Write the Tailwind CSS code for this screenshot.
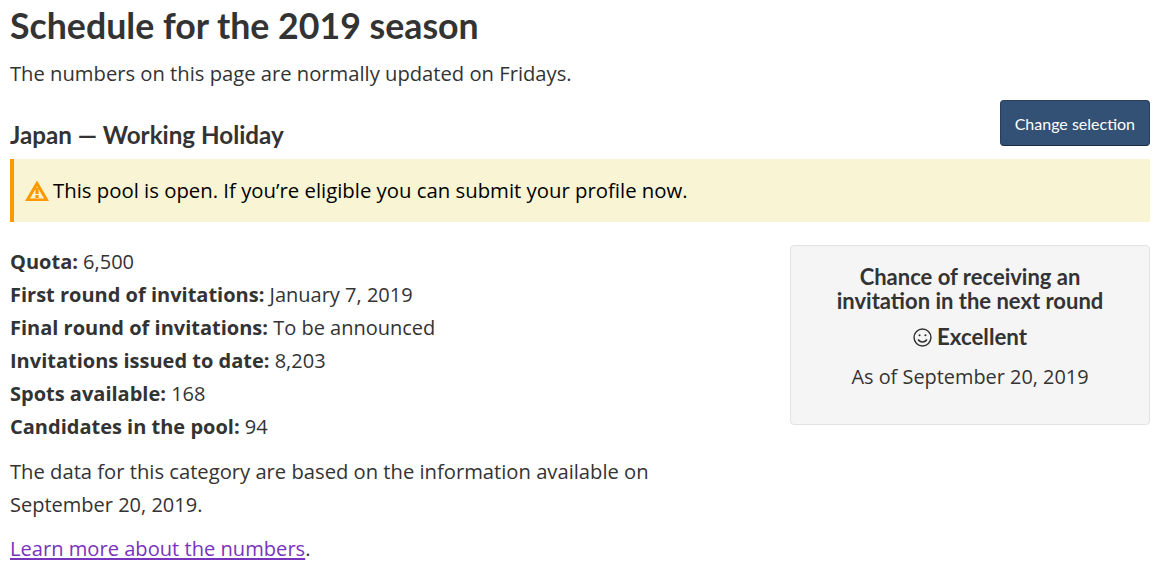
<!DOCTYPE html>
<html lang="en">
<head>
  <meta charset="UTF-8">
  <title>Schedule for the 2019 season</title>
  <script src="https://cdn.jsdelivr.net/npm/@tailwindcss/browser@4"></script>
</head>
<body class="bg-white text-[#333333] font-['Open_Sans',sans-serif] text-[20.2px] leading-[33px] overflow-hidden">
  <div class="pl-[10px] pr-[13px]">
    <h1 class="font-['Lato',sans-serif] font-bold text-[35.7px] leading-[42px] pt-[5px]">Schedule for the 2019 season</h1>
    <p class="mt-[10px]">The numbers on this page are normally updated on Fridays.</p>

    <div class="flex justify-between items-end mt-[10px]">
      <h2 class="font-['Lato',sans-serif] font-bold text-[24.2px] leading-[29px] mb-[-3px]">Japan — Working Holiday</h2>
      <button class="font-['Lato',sans-serif] text-white text-[16px] leading-[20px] bg-[#335075] border border-[#293e5a] border-b-[#1b2a3f] rounded-[4px] px-[14px] pt-[13px] pb-[11px]">Change selection</button>
    </div>

    <div class="mt-[13px] h-[63px] flex items-center gap-[4px] bg-[#f9f4d4] border-l-[4px] border-[#ff9900] pl-[11px] text-black">
      <svg class="w-[24px] h-[22px]" viewBox="0 0 24 22">
        <path fill="#ff9900" fill-rule="evenodd" d="M12 0.5 L24 21 H0 Z M12 6.5 L5 18.6 H19 Z"/>
        <rect x="10.4" y="8" width="3.2" height="6" fill="#ff9900"/>
        <rect x="10.4" y="15" width="3.2" height="3" fill="#ff9900"/>
      </svg>
      <span class="text-[20.33px]">This pool is open. If you’re eligible you can submit your profile now.</span>
    </div>

    <div class="flex justify-between items-start mt-[23px]">
      <div class="w-[700px]">
        <ul class="text-[20px]">
          <li><b>Quota:</b> 6,500</li>
          <li><b>First round of invitations:</b> January 7, 2019</li>
          <li><b>Final round of invitations:</b> To be announced</li>
          <li><b>Invitations issued to date:</b> 8,203</li>
          <li><b>Spots available:</b> 168</li>
          <li><b>Candidates in the pool:</b> 94</li>
        </ul>
        <p class="mt-[12px] w-[660px]">The data for this category are based on the information available on <span class="text-[20px]">September 20, 2019.</span></p>
        <p class="mt-[11px] text-[20.13px]"><a href="#" class="text-[#7834bc] underline">Learn more about the numbers</a>.</p>
      </div>
      <div class="w-[360px] h-[180px] bg-[#f5f5f5] border border-[#e3e3e3] rounded-[4px] text-center pt-[19px] px-[20px]">
        <h3 class="font-['Lato',sans-serif] font-bold text-[22px] leading-[24px]">Chance of receiving an<br>invitation in the next round</h3>
        <p class="font-['Lato',sans-serif] font-bold text-[22.3px] leading-[26px] mt-[11px] flex justify-center items-center gap-[5px]">
          <svg class="w-[19px] h-[19px]" viewBox="0 0 20 20" fill="none" stroke="#333333" stroke-width="1.5">
            <circle cx="10" cy="10" r="8.9"/>
            <circle cx="6.9" cy="7.6" r="1.1" fill="#333333" stroke="none"/>
            <circle cx="13.1" cy="7.6" r="1.1" fill="#333333" stroke="none"/>
            <path d="M5.4 12 C7 15.6 13 15.6 14.6 12"/>
          </svg>
          <span>Excellent</span>
        </p>
        <p class="mt-[10px] text-[19.9px]">As of September 20, 2019</p>
      </div>
    </div>
  </div>
</body>
</html>
